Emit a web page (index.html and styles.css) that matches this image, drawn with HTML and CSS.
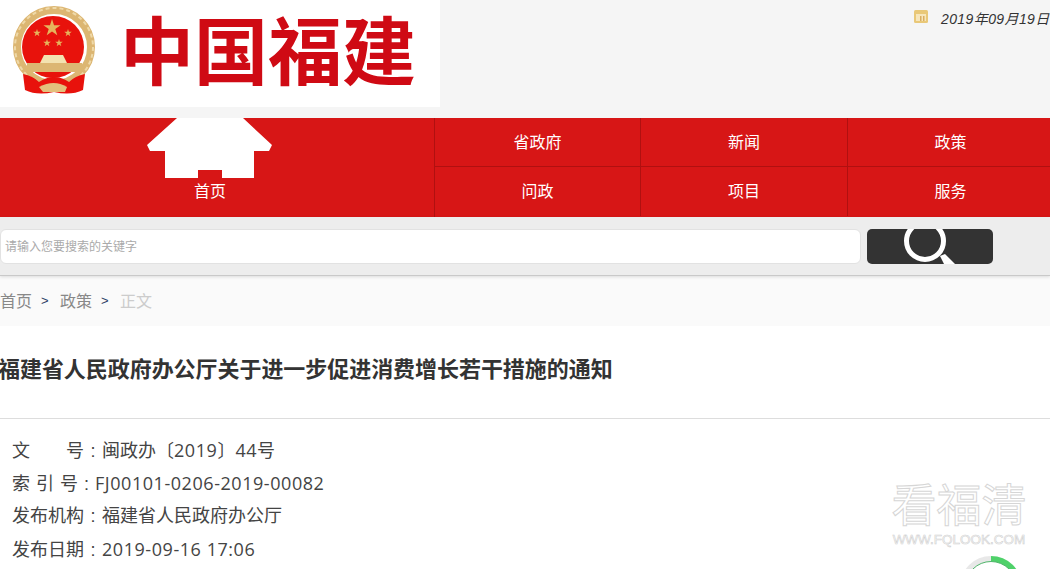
FILE: index.html
```html
<!DOCTYPE html>
<html>
<head>
  <meta charset="utf-8">
  <title>福建省人民政府办公厅关于进一步促进消费增长若干措施的通知</title>
  <link rel="stylesheet" href="styles.css">
</head>
<body>
  <div class="top-bar">
    <div class="logo">
      <svg class="emblem" width="84" height="90" viewBox="0 0 84 90">
        <defs>
          <polygon id="star" points="0,-10 2.25,-3.09 9.51,-3.09 3.63,1.18 5.88,8.09 0,3.82 -5.88,8.09 -3.63,1.18 -9.51,-3.09 -2.25,-3.09"/>
        </defs>
        <circle cx="41" cy="41" r="37" fill="none" stroke="#dcb672" stroke-width="8"/>
        <circle cx="41" cy="41" r="39" fill="none" stroke="#efd9a8" stroke-width="2" stroke-dasharray="4 3"/>
        <circle cx="40" cy="41" r="31" fill="#e8120c"/>
        <g fill="#e6b45c">
          <use href="#star" transform="translate(39 22) scale(0.9)"/>
          <use href="#star" transform="translate(24 27) scale(0.4)"/>
          <use href="#star" transform="translate(55 27) scale(0.4)"/>
          <use href="#star" transform="translate(34 37) scale(0.4)"/>
          <use href="#star" transform="translate(46 37) scale(0.4)"/>
        </g>
        <path d="M31 49 H50 L54 57 H27 Z" fill="#f3e2b0"/>
        <rect x="14" y="57" width="55" height="9" fill="#dcb672"/>
        <path d="M10 68 Q20 70 26 76 Q41 66 56 76 Q62 70 72 68 L70 84 Q58 90 41 86 Q24 90 12 84 Z" fill="#e8120c"/>
        <path d="M26 81 Q41 73 54 81 L52 86 H30 Z" fill="#e3c07c"/>
      </svg>
      <span class="logo-text">中国福建</span>
    </div>
    <div class="date">
      <svg width="14" height="13" viewBox="0 0 14 13">
        <rect x="0" y="0" width="14" height="13" rx="1.500" fill="#e9c878"/>
        <rect x="2" y="4" width="10" height="7" fill="#f7e6bb"/>
        <rect x="6" y="6" width="1.500" height="5" fill="#d9ae62"/>
        <rect x="9" y="6" width="1.500" height="5" fill="#d9ae62"/>
      </svg>
      <span>2019年09月19日</span>
    </div>
  </div>

  <div class="nav">
    <a class="nav-home">
      <svg class="home-icon" width="126" height="60" viewBox="0 0 126 60">
        <path d="M30 0 H96 L125 27 L122 33 L107 33 V60 H75 V52 H51 V60 H18 V33 L3 33 L0 27 Z" fill="#fff"/>
      </svg>
      <span>首页</span>
    </a>
    <div class="nav-grid">
      <a class="nav-item">省政府</a>
      <a class="nav-item">新闻</a>
      <a class="nav-item">政策</a>
      <a class="nav-item">问政</a>
      <a class="nav-item">项目</a>
      <a class="nav-item">服务</a>
    </div>
  </div>

  <div class="search-bar">
    <div class="search-input">请输入您要搜索的关键字</div>
    <div class="search-button">
      <svg width="126" height="35" viewBox="0 0 126 35">
        <circle cx="58" cy="12" r="18.500" fill="none" stroke="#fff" stroke-width="5"/>
        <path d="M73 27 L78 25 L88 35 H77 Z" fill="#fff"/>
      </svg>
    </div>
  </div>

  <div class="crumbs">
    <span>首页</span>
    <span class="sep">&gt;</span>
    <span>政策</span>
    <span class="sep">&gt;</span>
    <span class="current">正文</span>
  </div>

  <h1 class="title">福建省人民政府办公厅关于进一步促进消费增长若干措施的通知</h1>

  <div class="meta">
    <div class="meta-row"><span class="meta-key wide">文<i></i>号</span><span class="colon">:</span><span>闽政办〔<span class="num">2019</span>〕<span class="num">44</span>号</span></div>
    <div class="meta-row"><span class="meta-key spaced">索 引 号</span><span class="colon short">:</span><span class="num">FJ00101-0206-2019-00082</span></div>
    <div class="meta-row"><span class="meta-key">发布机构</span><span class="colon">:</span><span>福建省人民政府办公厅</span></div>
    <div class="meta-row"><span class="meta-key">发布日期</span><span class="colon">:</span><span class="num">2019-09-16 17:06</span></div>
  </div>

  <div class="watermark">
    <div class="mark-big">看福清</div>
    <div class="mark-small">WWW.FQLOOK.COM</div>
  </div>
  <div class="ring-clip">
    <div class="ring"></div>
  </div>
</body>
</html>
```

FILE: styles.css
```css
html, body {
  height: 569px;
  overflow: hidden;
}
body {
  margin: 0;
  position: relative;
  background-color: #fff;
  color: #444;
  font-family: "Liberation Sans", "Noto Sans CJK SC", sans-serif;
}
a {
  color: #fff;
}

.top-bar {
  display: flex;
  height: 118px;
  background-color: #f5f5f5;
}
.logo {
  display: flex;
  align-items: flex-start;
  width: 440px;
  height: 107px;
  background-color: #fff;
  flex-shrink: 0;
}
.emblem {
  margin: 6px 0 0 13px;
  flex-shrink: 0;
  filter: blur(0.4px);
}
.logo-text {
  margin: 9px 0 0 23px;
  font-size: 74px;
  line-height: 90px;
  font-weight: 700;
  color: #cf0a14;
  white-space: nowrap;
}
.date {
  display: flex;
  align-items: flex-start;
  gap: 13px;
  margin: 10px 0 0 474px;
  font-size: 14px;
  line-height: 18px;
  letter-spacing: 0.4px;
  font-style: italic;
  color: #333;
  white-space: nowrap;
  flex-shrink: 0;
}

.nav {
  display: flex;
  height: 99px;
  background-color: #d71616;
}
.nav-home {
  display: flex;
  flex-direction: column;
  align-items: center;
  width: 420px;
  padding-right: 14px;
  font-size: 16px;
  line-height: 22px;
  flex-shrink: 0;
}
.home-icon {
  display: block;
  margin-bottom: 3px;
  filter: blur(0.6px);
}
.nav-grid {
  flex: 1;
  display: grid;
  grid-template-columns: 206px 207px 1fr;
  grid-template-rows: 49px 49px;
  border-left: 1px solid #b01010;
}
.nav-item {
  display: flex;
  align-items: center;
  justify-content: center;
  padding-bottom: 3px;
  box-sizing: border-box;
  font-size: 16px;
  border-right: 1px solid #b01010;
  border-bottom: 1px solid #b01010;
}
.nav-item:nth-child(3n) {
  border-right: none;
  padding-left: 3px;
}
.nav-item:nth-child(n+4) {
  border-bottom: none;
}

.search-bar {
  display: flex;
  gap: 6px;
  height: 59px;
  padding-top: 12px;
  box-sizing: border-box;
  background-color: #ededed;
  border-bottom: 1px solid #c9c9c9;
  box-shadow: 0 1px 3px rgba(0,0,0,0.12);
  position: relative;
}
.search-input {
  width: 861px;
  height: 35px;
  padding-left: 4px;
  background-color: #fff;
  border-radius: 6px;
  border: 1px solid #e2e2e2;
  box-sizing: border-box;
  font-size: 12px;
  line-height: 35px;
  color: #aaa;
}
.search-button {
  width: 126px;
  height: 35px;
  background-color: #333;
  border-radius: 5px;
  overflow: hidden;
}
.search-button svg {
  display: block;
}

.crumbs {
  display: flex;
  align-items: center;
  gap: 9px;
  height: 50px;
  padding-bottom: 2px;
  box-sizing: border-box;
  background-color: #fafafa;
  font-size: 16px;
  color: #888;
}
.crumbs .sep {
  width: 10px;
  font-size: 13px;
  color: #2c3e66;
}
.crumbs .current {
  color: #ccc;
}

.title {
  margin: 0 0 0 -2px;
  height: 93px;
  border-bottom: 1px solid #ddd;
  box-sizing: border-box;
  padding-top: 26px;
  font-size: 22px;
  line-height: 36px;
  letter-spacing: -0.05px;
  font-weight: 700;
  color: #333;
  white-space: nowrap;
}

.meta {
  padding: 15px 0 0 12px;
  font-size: 18px;
  line-height: 33px;
  color: #444;
}
.meta-row {
  display: flex;
  align-items: baseline;
  height: 33px;
  white-space: nowrap;
}
.meta-key {
  width: 72px;
}
.meta-key.spaced {
  white-space: pre;
  word-spacing: 1px;
}
.meta-key.wide {
  display: flex;
  justify-content: space-between;
}
.colon {
  width: 18px;
  text-align: center;
}
.colon.short {
  width: 11px;
  text-align: left;
}
.num {
  font-family: "Open Sans", sans-serif;
  letter-spacing: 0.55px;
}

.watermark {
  position: absolute;
  left: 891px;
  top: 482px;
  width: 136px;
  color: #fff;
  -webkit-text-stroke: 1px #d6d6d6;
  text-align: center;
}
.mark-big {
  font-size: 45px;
  line-height: 50px;
  white-space: nowrap;
}
.mark-small {
  font-size: 13.500px;
  line-height: 16px;
  -webkit-text-stroke: 0.6px #cfcfcf;
  white-space: nowrap;
}
.ring-clip {
  position: absolute;
  left: 960px;
  top: 556px;
  width: 62px;
  height: 13px;
  overflow: hidden;
}
.ring {
  width: 62px;
  height: 62px;
  box-sizing: border-box;
  padding: 5px;
  border-radius: 50%;
  background: conic-gradient(#4fd16a 0 80deg, #e8e8e8 80deg);
}
.ring:before {
  content: "";
  display: block;
  width: 100%;
  height: 100%;
  box-sizing: border-box;
  border: 1px solid #4fb56a;
  border-radius: 50%;
  background-color: #fff;
}
```
